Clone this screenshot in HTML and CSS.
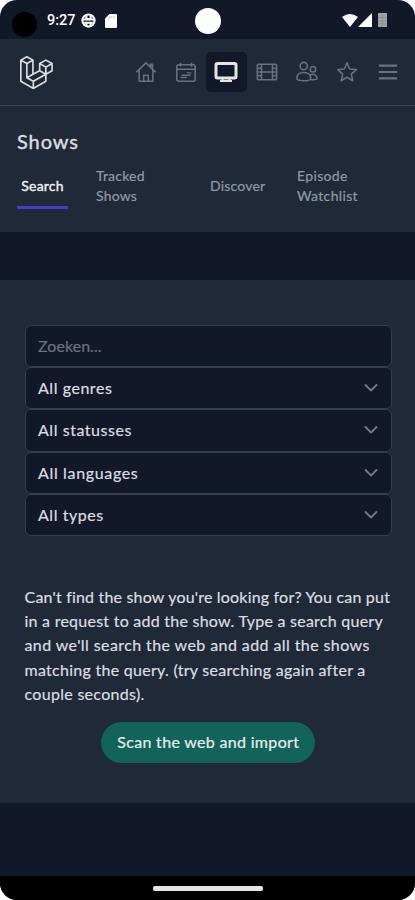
FILE: index.html
```html
<!DOCTYPE html>
<html lang="en">
<head>
<meta charset="utf-8">
<title>Shows</title>
<link rel="stylesheet" href="styles.css">
</head>
<body>
<div class="phone">
  <div class="status">
    <span class="camera"></span>
    <span class="time">9:27</span>
    <svg class="globe" viewBox="0 0 14 14"><circle cx="7" cy="7" r="5.700"/><path d="M1.500 6h11M3 9h8M5 1.800v3.700h4V1.800M5 9v3M9 9v3"/></svg>
    <svg class="sd" viewBox="0 0 12 14"><path d="M4.500 0H11q1 0 1 1v12q0 1-1 1H1q-1 0-1-1V4.500z"/><path class="slots" d="M4.500 2v2.500M6.800 2v2.500M9.100 2v2.500"/></svg>
    <span class="lens"></span>
    <svg class="signals" viewBox="0 0 47 15"><path d="M0 4Q8 -2 16 4L8 14z"/><path d="M30 0v14H16z"/><path class="battery" d="M36 0h9v14h-9z"/><path class="grid" d="M36 4.500h9M36 8h9M36 11h9M40.500 1v13"/></svg>
  </div>
  <nav class="nav">
    <svg class="logo" viewBox="0 0 24 24"><path d="M.6 3 5 .5 9.400 3 5 5.500zM.6 3v15.400l9.100 5.200 9.100-5.200v-5.100l4.500-2.600V5.500L18.800 3l-4.500 2.500v5.200l4.500 2.600V8.100l-4.500-2.600M18.800 8.100l4.500-2.600M5 5.500v10.300l4.700 2.600 9.100-5.100M9.400 3v10.300L5 15.800M9.400 13.300l4.900-2.600M9.700 18.400v5.200"/></svg>
    <div class="links">
      <a><svg viewBox="0 0 24 24"><path d="M1.500 12.200 12 2l10.500 10.200M4.500 9.800V22h15V9.800M9.500 22v-6.500h5V22M17 6.500V3.500h2v5"/></svg></a>
      <a><svg viewBox="0 0 24 24"><path d="M4 4h16q2 0 2 2v14q0 2-2 2H4q-2 0-2-2V6q0-2 2-2zM2 9h20M6 2v4M18 2v4"/><path class="days" d="M13 13h5M7 15.500h10M6 18h7"/></svg></a>
      <a class="active"><svg viewBox="0 0 24 24"><path d="M3.500 3.500h17q1.500 0 1.500 1.500v11.500q0 1.500-1.500 1.500h-17Q2 18 2 16.500V5q0-1.500 1.500-1.500z"/><path class="stand" d="M9 18.500l-1 2.500M15 18.500l1 2.500M6 21h12"/></svg></a>
      <a><svg viewBox="0 0 24 24"><path d="M2.500 3.500h19q1 0 1 1v15q0 1-1 1h-19q-1 0-1-1v-15q0-1 1-1zM6 3.500v17M18 3.500v17M6 12h12M1.500 8H6M1.500 12H6M1.500 16H6M18 8h4.500M18 12h4.500M18 16h4.500"/></svg></a>
      <a><svg viewBox="0 0 24 24"><circle cx="8.500" cy="5.500" r="4"/><circle cx="18.500" cy="9" r="3"/><path d="M1 19c0-4 3-6.500 7.500-6.500S16 15 16 19c0 1.500-2 2.500-7.500 2.500S1 20.500 1 19zM15.500 15c4-1.500 7.500.5 7.500 4 0 1-2 1.500-7 1.500"/></svg></a>
      <a><svg viewBox="0 0 24 24"><path d="m12 2 2.900 6.700 7.300.7-5.500 4.900 1.600 7.200-6.300-3.800-6.300 3.800 1.600-7.200-5.500-4.900 7.300-.7z"/></svg></a>
      <a><svg viewBox="0 0 24 24"><path class="bars" d="M2 5h20M2 12h20M2 19h20"/></svg></a>
    </div>
  </nav>
  <header class="header">
    <h1>Shows</h1>
    <div class="tabs">
      <a class="tab selected">Search</a>
      <a class="tab tracked">Tracked<br>Shows</a>
      <a class="tab discover">Discover</a>
      <a class="tab episode">Episode<br>Watchlist</a>
    </div>
  </header>
  <main class="panel">
    <div class="fields">
      <div class="field hint">Zoeken...</div>
      <div class="field"><span>All genres</span><svg viewBox="0 0 14 8"><path d="m1.500 1 5.500 5.500L12.500 1"/></svg></div>
      <div class="field"><span>All statusses</span><svg viewBox="0 0 14 8"><path d="m1.500 1 5.500 5.500L12.500 1"/></svg></div>
      <div class="field languages"><span>All languages</span><svg viewBox="0 0 14 8"><path d="m1.500 1 5.500 5.500L12.500 1"/></svg></div>
      <div class="field"><span>All types</span><svg viewBox="0 0 14 8"><path d="m1.500 1 5.500 5.500L12.500 1"/></svg></div>
    </div>
    <p class="note"><span class="l1">Can't find the show you're looking for? You can put</span><br><span class="l2">in a request to add the show. Type a search query</span><br><span class="l3">and we'll search the web and add all the shows</span><br><span class="l4">matching the query. (try searching again after a</span><br><span class="l5">couple seconds).</span></p>
    <button class="import">Scan the web and import</button>
  </main>
  <div class="homebar"><span></span></div>
</div>
</body>
</html>
```
FILE: styles.css
```css
* { box-sizing: border-box; }
body { margin: 0; background: #fff; font-family: Lato, "Open Sans", sans-serif; color: #dcdee2; -webkit-text-stroke: .2px; }
.phone { width: 415px; height: 900px; background: #111827; border-radius: 17px; overflow: hidden; display: flex; flex-direction: column; }
svg { display: block; fill: none; stroke: currentColor; }
.status { height: 39px; display: flex; align-items: center; padding: 2px 26px 0 12px; flex: none; color: #fff; }
.camera { width: 25px; height: 25px; border-radius: 50%; background: #000; margin-top: 8px; }
.time { font: 500 14.500px Roboto, sans-serif; margin-left: 10px; width: 28px; white-space: nowrap; -webkit-text-stroke: 0; }
.globe { width: 15px; height: 15px; stroke-width: 1.900; margin-left: 6px; }
.sd { width: 12px; height: 14px; margin-left: 9px; fill: #fff; stroke: none; }
.sd .slots { stroke: #bbb; stroke-width: .8; }
.lens { width: 26px; height: 26px; border-radius: 50%; background: #fff; margin-left: 78px; }
.signals { width: 47px; height: 15px; margin-left: auto; fill: #fff; stroke: none; }
.signals .battery { fill: #a2a3a6; }
.signals .grid { stroke: #8b8d92; stroke-width: 1; }
.nav { height: 67px; background: #1f2937; border-bottom: 1px solid #374151; display: flex; align-items: center; justify-content: space-between; padding: 0 7px 0 20px; flex: none; }
.logo { width: 33px; height: 33px; stroke: #dbdde0; stroke-width: 1.200; stroke-linejoin: round; }
.links { display: flex; }
.links a { width: 40.350px; height: 40px; display: flex; align-items: center; justify-content: center; color: #69717f; border-radius: 5px; }
.links svg { width: 22px; height: 22px; stroke-width: 1.700; stroke-linejoin: round; }
.links .active { background: #111827; color: #e5e5e5; }
.links .active svg { width: 24px; height: 24px; stroke-width: 3; }
.links .active .stand { stroke-width: 2; }
.links .bars { stroke-width: 2.300; }
.links .days { stroke-width: 1.500; }
.header { height: 126px; background: #1f2937; padding: 21px 17px 0; flex: none; }
h1 { margin: 0; font-size: 20px; line-height: 28px; font-weight: 400; letter-spacing: .9px; -webkit-text-stroke: .4px; }
.tabs { display: flex; align-items: stretch; margin-top: 8px; height: 46px; font-size: 14px; line-height: 20.200px; color: #929aa7; letter-spacing: .2px; }
.tab { display: flex; align-items: center; }
.selected { color: #f1f2f4; width: 51px; justify-content: center; border-bottom: 3px solid #463dc5; padding-top: 3px; height: 46px; -webkit-text-stroke: .35px; }
.tracked { width: 114px; padding-left: 28px; }
.discover { width: 87px; padding-left: 28px; }
.episode { padding-left: 28px; letter-spacing: .35px; }
.panel { margin-top: 48px; height: 523px; background: #1f2937; padding: 44.500px 23px 0 24.500px; display: flex; flex-direction: column; flex: none; }
.fields { display: grid; grid-auto-rows: 42.400px; }
.field { border: 1px solid #343e4d; border-radius: 6px; background: #111827; padding: 0 13.500px 1px 12.500px; display: flex; align-items: center; justify-content: space-between; font-size: 16px; letter-spacing: .55px; }
.languages { letter-spacing: .66px; }
.hint { color: #6b7280; letter-spacing: .05px; }
.field svg { width: 14px; height: 8px; margin-top: 1px; stroke: #737b89; stroke-width: 1.800; stroke-linecap: round; stroke-linejoin: round; }
.note { margin: 48.500px 0 0; font-size: 16px; line-height: 24.200px; white-space: nowrap; letter-spacing: .3px; }
.l1 { letter-spacing: .19px; }
.l2 { letter-spacing: .25px; }
.l3 { letter-spacing: .41px; }
.l4 { letter-spacing: .28px; }
.import { margin: 16px 0 0; align-self: center; width: 214px; height: 41px; border: 0; border-radius: 21px; background: #12645a; color: #e9eeee; font: 16px/39px Lato, sans-serif; letter-spacing: .32px; padding: 0 0 2px; }
.homebar { height: 24px; background: #000; margin-top: auto; display: flex; justify-content: center; padding-top: 10px; }
.homebar span { width: 110px; height: 5px; border-radius: 2px; background: #e4e5e4; }
```
